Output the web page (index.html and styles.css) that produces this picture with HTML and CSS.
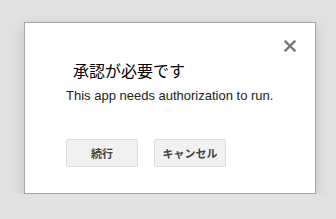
FILE: index.html
```html
<!DOCTYPE html>
<html lang="ja">
<head>
    <meta charset="UTF-8">
    <title>承認が必要です</title>
    <link rel="stylesheet" href="styles.css">
</head>
<body>
    <div class="dialog">
        <button class="close" aria-label="閉じる">
            <svg width="12" height="12" viewBox="0 0 12 12">
                <path d="M1.5 1.5 L10.5 10.5 M10.5 1.5 L1.5 10.5" stroke="#777" stroke-width="2.4" stroke-linecap="square"/>
            </svg>
        </button>
        <h1 class="title">承認が必要です</h1>
        <p class="message">This app needs authorization to run.</p>
        <div class="buttons">
            <button class="btn">続行</button>
            <button class="btn">キャンセル</button>
        </div>
    </div>
</body>
</html>
```

FILE: styles.css
```css
body {
    margin: 0;
    padding: 22px 0 0 24px;
    background-color: #e1e1e1;
    font-family: Arial, "Liberation Sans", "Noto Sans CJK JP", sans-serif;
}

.dialog {
    position: relative;
    box-sizing: border-box;
    width: 292px;
    height: 172px;
    padding: 0 0 0 41px;
    background-color: #fff;
    border: 1px solid #a5a5a5;
    box-shadow: 0 4px 12px rgba(0, 0, 0, 0.15);
}

.close {
    position: absolute;
    top: 17px;
    right: 19px;
    padding: 0;
    border: 0;
    background: none;
    line-height: 0;
    cursor: pointer;
}

.title {
    margin: 37px 0 0 0;
    padding-left: 7px;
    font-family: "Noto Sans CJK JP", sans-serif;
    font-size: 16px;
    font-weight: normal;
    line-height: 20px;
    color: #000;
}

.message {
    margin: 8px 0 0 0;
    font-size: 13px;
    line-height: 16px;
    color: #222;
}

.buttons {
    display: flex;
    gap: 16px;
    margin-top: 35px;
}

.btn {
    box-sizing: border-box;
    width: 72px;
    height: 28px;
    padding: 0;
    background-color: #f1f1f1;
    border: 1px solid #dcdcdc;
    border-radius: 2px;
    font-family: "Noto Sans CJK JP", sans-serif;
    font-size: 11px;
    font-weight: bold;
    color: #444;
    cursor: pointer;
}
```
